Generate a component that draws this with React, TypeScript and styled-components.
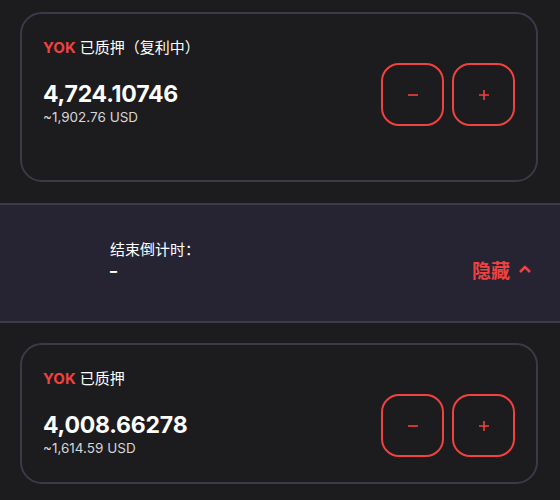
import React from 'react';
import styled, { createGlobalStyle } from 'styled-components';

const GlobalStyle = createGlobalStyle`
  html, body {
    margin: 0;
    padding: 0;
    background: #1c1b1e;
  }
  body {
    font-family: Inter, "Noto Sans CJK SC", sans-serif;
    color: #fff;
  }
`;

const red = '#f0423f';

const Page = styled.div`
  width: 560px;
  height: 500px;
  overflow: hidden;
  display: flex;
  flex-direction: column;
  padding-top: 12px;
  box-sizing: border-box;
`;

const Card = styled.div<{ $bottom: number }>`
  margin: 0 22px 0 20px;
  border: 2px solid #3c3a48;
  border-radius: 22px;
  padding: 24px 21px ${(p) => p.$bottom}px 21px;
  display: flex;
  justify-content: space-between;
  align-items: flex-start;
`;

const Info = styled.div`
  display: flex;
  flex-direction: column;
`;

const Title = styled.div`
  font-size: 15px;
  line-height: 20px;
  color: #fff;
  font-family: Inter, "Noto Sans CJK SC", sans-serif;

  b {
    color: ${red};
    font-weight: 700;
    margin-right: 4px;
  }
`;

const Amount = styled.div`
  margin-top: 22px;
  font-size: 23px;
  line-height: 28px;
  font-weight: 700;
  letter-spacing: -0.2px;
`;

const Usd = styled.div`
  margin-top: 1px;
  font-size: 13.5px;
  line-height: 16px;
  color: #d6d6d8;
`;

const Buttons = styled.div`
  display: flex;
  gap: 8px;
  margin-top: 25px;
`;

const RoundButton = styled.button`
  width: 63px;
  height: 63px;
  box-sizing: border-box;
  border: 2px solid ${red};
  border-radius: 18px;
  background: transparent;
  color: ${red};
  display: flex;
  align-items: center;
  justify-content: center;
  padding: 0;
`;

const Band = styled.div`
  margin-top: 21px;
  border-top: 2px solid #3d3a4c;
  border-bottom: 2px solid #3d3a4c;
  background: #262433;
  height: 116px;
  display: flex;
  align-items: center;
  justify-content: space-between;
  padding: 0 28px 0 110px;
`;

const Countdown = styled.div`
  align-self: flex-start;
  display: flex;
  flex-direction: column;
  margin-top: 35px;
  font-family: "Noto Sans CJK SC", sans-serif;
  font-size: 15px;
  line-height: 18px;
  color: #fff;
`;

const Dash = styled.span`
  font-family: Inter, sans-serif;
  font-weight: 800;
  font-size: 14px;
  line-height: 26px;
`;

const HideToggle = styled.div`
  display: flex;
  align-items: center;
  gap: 8px;
  margin-top: 12px;
  color: ${red};
  font-family: "Noto Sans CJK SC", sans-serif;
  font-size: 19px;
  font-weight: 700;
`;

const Spacer = styled.div`
  height: 20px;
`;

const Minus = () => (
  <svg width="14" height="14" viewBox="0 0 14 14">
    <path d="M2 7h10" stroke={red} strokeWidth="1.6" />
  </svg>
);

const Plus = () => (
  <svg width="14" height="14" viewBox="0 0 14 14">
    <path d="M2 7h10M7 2v10" stroke={red} strokeWidth="1.6" />
  </svg>
);

const Chevron = () => (
  <svg width="14" height="10" viewBox="0 0 14 10">
    <path d="M2 8l5-5 5 5" fill="none" stroke={red} strokeWidth="2.6" />
  </svg>
);

const StakeCard = ({
  title,
  amount,
  usd,
  bottom,
}: {
  title: string;
  amount: string;
  usd: string;
  bottom: number;
}) => (
  <Card $bottom={bottom}>
    <Info>
      <Title>
        <b>YOK</b>
        {title}
      </Title>
      <Amount>{amount}</Amount>
      <Usd>{usd}</Usd>
    </Info>
    <Buttons>
      <RoundButton>
        <Minus />
      </RoundButton>
      <RoundButton>
        <Plus />
      </RoundButton>
    </Buttons>
  </Card>
);

const App = () => (
  <Page>
    <GlobalStyle />
    <StakeCard title="已质押（复利中）" amount="4,724.10746" usd="~1,902.76 USD" bottom={54} />
    <Band>
      <Countdown>
        <span>结束倒计时：</span>
        <Dash>–</Dash>
      </Countdown>
      <HideToggle>
        隐藏
        <Chevron />
      </HideToggle>
    </Band>
    <Spacer />
    <StakeCard title="已质押" amount="4,008.66278" usd="~1,614.59 USD" bottom={25} />
  </Page>
);

export default App;
